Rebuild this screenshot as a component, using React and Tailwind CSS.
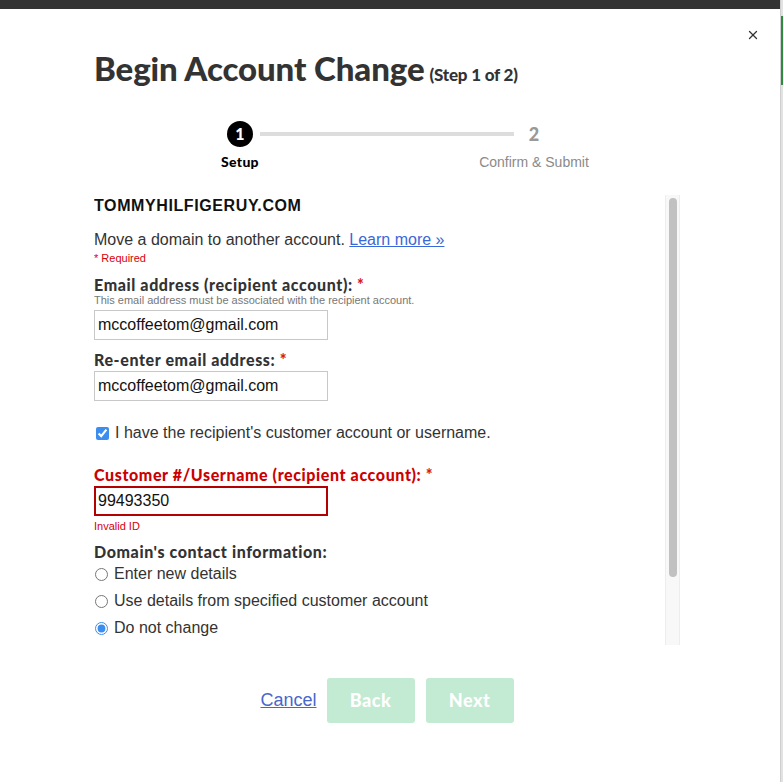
import React from "react";
import { X } from "lucide-react";

const heading = "font-['Lato','Noto_Sans',sans-serif]";
const body = "font-['Liberation_Sans',Arial,sans-serif]";

function Label({ children, red, className = "" }) {
    return (
        <div className={`${heading} font-black text-[16px] leading-[18px] tracking-[0.6px] ${red ? "text-[#cc0000]" : "text-[#333]"} ${className}`}>
            {children} <span className="text-[#db1a1a]">*</span>
        </div>
    );
}

function Radio({ label, checked, className = "" }) {
    return (
        <label className={`flex items-center h-[20px] ${className}`}>
            <input type="radio" name="contact" defaultChecked={checked} className="ml-[1px] w-[13px] h-[13px] accent-[#3b8ef0]" />
            <span className="ml-[6px] text-[16px] leading-[20px] text-[#333]">{label}</span>
        </label>
    );
}

export default function App() {
    return (
        <div className={`flex w-full min-h-screen bg-white ${body}`}>
            <div className="flex-1 flex flex-col">
                <div className="h-[9px] bg-[#333333]" />
                <div className="relative pl-[94px] pr-[100px]">
                    <button className="absolute right-[20px] top-[19px] text-[#333]">
                        <X size={14} strokeWidth={2.2} />
                    </button>

                    <h1 className={`${heading} mt-[39px] h-[40px] flex items-baseline text-[#333]`}>
                        <span className="font-black text-[33px] leading-[40px] tracking-[-0.1px]">Begin Account Change</span>
                        <span className="ml-[5px] font-black text-[17px] tracking-[-0.2px]">(Step 1 of 2)</span>
                    </h1>

                    {/* stepper */}
                    <div className="mt-[33px] ml-[116px] flex items-start">
                        <div className="w-[60px] flex flex-col items-center">
                            <div className={`${heading} w-[26px] h-[26px] rounded-full bg-black text-white flex items-center justify-center font-black text-[16px]`}>1</div>
                            <div className={`${heading} mt-[6px] font-black text-[14px] leading-[18px] tracking-[0.3px] text-black`}>Setup</div>
                        </div>
                        <div className="w-[254px] shrink-0 h-[4px] mt-[11px] -ml-[10px] -mr-[40px] bg-[#dddddd]" />
                        <div className="w-[120px] flex flex-col items-center">
                            <div className={`${heading} h-[26px] flex items-center font-black text-[18px] text-[#999]`}>2</div>
                            <div className="mt-[6px] text-[14px] leading-[18px] text-[#8a8a8a]">Confirm &amp; Submit</div>
                        </div>
                    </div>

                    {/* form panel with its scroll track */}
                    <div className="mt-[24px] h-[450px] flex">
                        <div className="flex-1 overflow-hidden pt-[1px]">
                            <div className="text-[16px] leading-[20px] font-bold tracking-[0.6px] text-[#111]">TOMMYHILFIGERUY.COM</div>
                            <div className="mt-[14px] text-[16px] leading-[20px] text-[#333]">
                                Move a domain to another account.{" "}
                                <a href="#" className="text-[#3a68d8] underline">Learn more »</a>
                            </div>
                            <div className="mt-[1px] text-[11px] leading-[14px] text-[#d8000c]">* Required</div>

                            <Label className="mt-[11px]">Email address (recipient account):</Label>
                            <div className="text-[11px] leading-[12px] text-[#777]">This email address must be associated with the recipient account.</div>
                            <input readOnly value="mccoffeetom@gmail.com" className="mt-[4px] block w-[234px] h-[30px] px-[3px] border border-[#c8c8c8] text-[16px] text-[#111] outline-none" />

                            <Label className="mt-[11px]">Re-enter email address:</Label>
                            <input readOnly value="mccoffeetom@gmail.com" className="mt-[2px] block w-[234px] h-[30px] px-[3px] border border-[#c8c8c8] text-[16px] text-[#111] outline-none" />

                            <label className="mt-[22px] flex items-center h-[20px]">
                                <input type="checkbox" defaultChecked className="ml-[2px] w-[13px] h-[13px] accent-[#3b8ef0]" />
                                <span className="ml-[6px] text-[16px] leading-[20px] text-[#333]">I have the recipient's customer account or username.</span>
                            </label>

                            <Label red className="mt-[23px]">Customer #/Username (recipient account):</Label>
                            <input readOnly value="99493350" className="mt-[2px] block w-[234px] h-[30px] px-[2px] border-2 border-[#b30000] text-[16px] text-[#111] outline-none" />
                            <div className="mt-[3px] text-[11px] leading-[14px] text-[#d8000c]">Invalid ID</div>

                            <div className={`${heading} mt-[10px] font-black text-[16px] leading-[18px] tracking-[0.6px] text-[#333]`}>Domain's contact information:</div>
                            <Radio className="mt-[3px]" label="Enter new details" />
                            <Radio className="mt-[7px]" label="Use details from specified customer account" />
                            <Radio className="mt-[7px]" label="Do not change" checked />
                        </div>
                        <div className="w-[15px] shrink-0 bg-[#f8f8f8] border-x border-[#ededed] pt-[3px]">
                            <div className="mx-auto w-[8px] h-[379px] rounded-full bg-[#c1c1c1]" />
                        </div>
                    </div>

                    {/* actions */}
                    <div className="mt-[33px] flex items-center justify-center gap-[10px]">
                        <a href="#" className="text-[18px] text-[#4a66cc] underline">Cancel</a>
                        <button disabled className={`${heading} w-[88px] h-[45px] rounded-[3px] bg-[#c3ead2] text-white font-black text-[18px] tracking-[0.5px]`}>Back</button>
                        <button disabled className={`${heading} ml-[1px] w-[88px] h-[45px] rounded-[3px] bg-[#c3ead2] text-white font-black text-[18px] tracking-[0.5px]`}>Next</button>
                    </div>
                </div>
            </div>
            <div className="w-[3px] flex flex-col bg-[#e2e2e2] border-l border-[#cfcfcf]">
                <div className="mt-[16px] h-[69px] bg-[#2e8b3e]" />
            </div>
        </div>
    );
}
